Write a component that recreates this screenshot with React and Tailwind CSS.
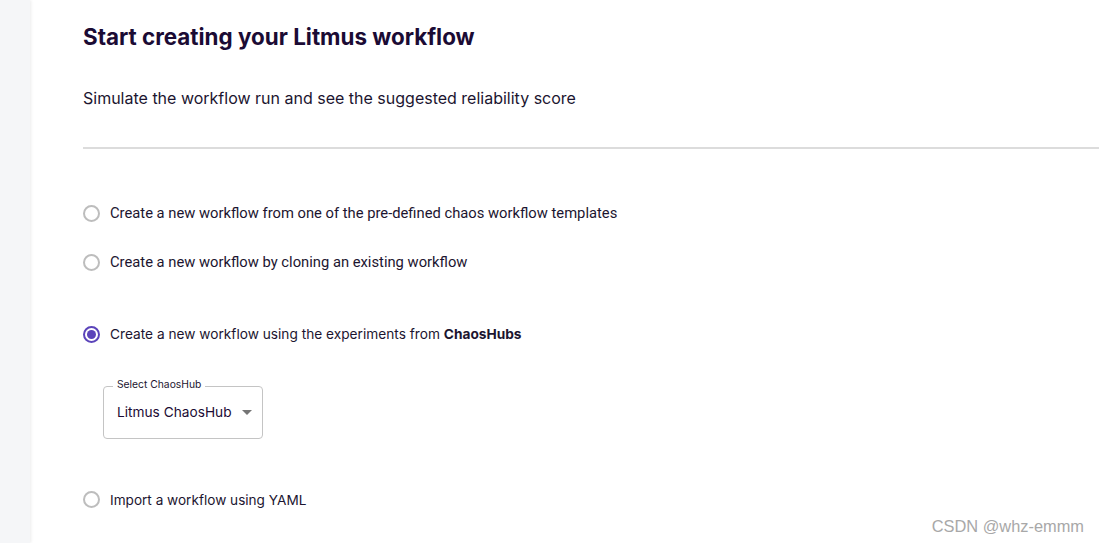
import React from 'react';

const inter = { fontFamily: 'Inter, "Noto Sans", sans-serif' };
const roboto = { fontFamily: 'Roboto, "Liberation Sans", sans-serif' };

function Radio({ checked }) {
  return (
    <span
      className={
        'flex h-[17px] w-[17px] shrink-0 items-center justify-center rounded-full border-2 ' +
        (checked ? 'border-[#5b44ba]' : 'border-[#bdbdbd]')
      }
    >
      {checked && <span className="h-[9px] w-[9px] rounded-full bg-[#5b44ba]" />}
    </span>
  );
}

function Option({ checked, children, font, size }) {
  return (
    <label className={'flex items-center gap-[10px] text-[#1c1530] ' + size} style={font}>
      <Radio checked={checked} />
      <span>{children}</span>
    </label>
  );
}

export default function App() {
  return (
    <div className="flex h-[543px] w-[1099px] overflow-hidden bg-white">
      <aside className="w-[30px] shrink-0 bg-[#f5f6f8] shadow-[1px_0_3px_rgba(0,0,0,0.08)]" />
      <main className="relative flex-1 pl-[53px] pt-[23px]">
        <h1 className="text-[22.4px] font-bold leading-[28px] text-[#1b0b34]" style={inter}>
          Start creating your Litmus workflow
        </h1>
        <p className="mt-[35px] text-[16px] leading-[24px] text-[#1c1530]" style={inter}>
          Simulate the workflow run and see the suggested reliability score
        </p>
        <div className="mt-[37px] h-[2px] bg-[#dcdcdc]" />

        <div className="mt-[53px] flex flex-col">
          <Option font={roboto} size="text-[14.75px]">
            Create a new workflow from one of the pre-defined chaos workflow templates
          </Option>
          <div className="mt-[27px]">
            <Option font={roboto} size="text-[14.75px]">
              Create a new workflow by cloning an existing workflow
            </Option>
          </div>
          <div className="mt-[51px]">
            <Option checked font={inter} size="text-[13.7px]">
              Create a new workflow using the experiments from{' '}
              <span className="font-bold">ChaosHubs</span>
            </Option>
          </div>

          <div className="relative ml-[20px] mt-[41px] flex h-[53px] w-[160px] items-center rounded-[4px] border border-[#c4c4c4] pl-[13px]">
            <span
              className="absolute -top-[11px] left-[9px] whitespace-nowrap bg-white px-[4px] text-[10.3px] leading-[16px] text-[#1c1530]"
              style={inter}
            >
              Select ChaosHub
            </span>
            <span className="whitespace-nowrap text-[13.7px] text-[#1b0b34]" style={inter}>
              Litmus ChaosHub
            </span>
            <svg className="ml-[10px] shrink-0" width="10" height="5" viewBox="0 0 10 5">
              <path d="M0 0h10L5 5z" fill="#757575" />
            </svg>
          </div>

          <div className="mt-[51px]">
            <Option font={inter} size="text-[13.6px]">
              Import a workflow using YAML
            </Option>
          </div>
        </div>

        <span
          className="absolute bottom-[4px] right-[15px] text-[16.4px] text-[#a8a8a8]"
          style={{ fontFamily: '"Liberation Sans", Arial, sans-serif' }}
        >
          CSDN @whz-emmm
        </span>
      </main>
    </div>
  );
}
